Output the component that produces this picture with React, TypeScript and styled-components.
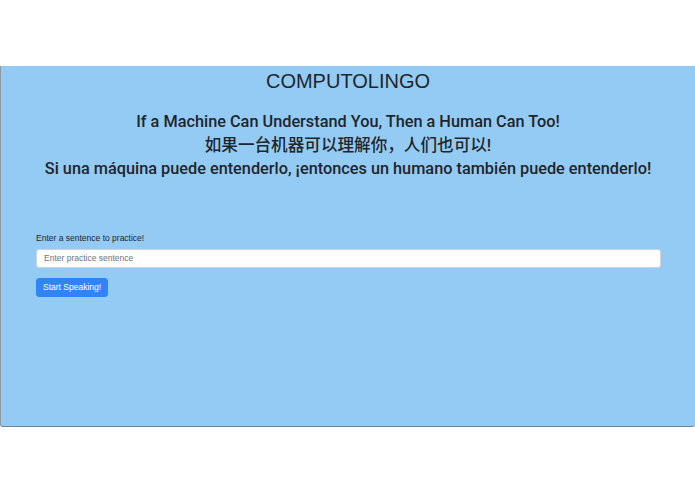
import styled, { createGlobalStyle } from 'styled-components'

const GlobalStyle = createGlobalStyle`
  html, body {
    margin: 0;
    padding: 0;
    background: #ffffff;
    font-family: "Liberation Sans", Arial, "Noto Sans CJK SC", sans-serif;
    color: #212529;
  }
`

const Page = styled.div`
  padding-top: 66px;
  height: 494px;
  box-sizing: border-box;
`

const Frame = styled.main`
  height: 361px;
  box-sizing: border-box;
  background: #94cbf5;
  border-left: 1px solid #8a9aa8;
  border-bottom: 1px solid #6f8294;
  border-radius: 0 0 3px 3px;
  display: flex;
  flex-direction: column;
`

const Header = styled.header`
  text-align: center;
  padding-top: 3px;
`

const Title = styled.h1`
  margin: 0;
  font-size: 20px;
  font-weight: 400;
  line-height: 24px;
`

const Tagline = styled.p<{ $cjk?: boolean }>`
  margin: 0;
  font-family: Roboto, "Noto Sans CJK SC", sans-serif;
  font-size: ${p => (p.$cjk ? '16.6px' : '16.3px')};
  line-height: 23.5px;
  font-weight: 500;
  color: #1f2529;
`

const Taglines = styled.div`
  margin-top: 17px;
`

const Form = styled.form`
  margin-top: 52px;
  padding: 0 34px 0 35px;
  display: flex;
  flex-direction: column;
  align-items: flex-start;
`

const Label = styled.label`
  font-size: 8.5px;
  line-height: 10px;
  margin-bottom: 6px;
`

const Input = styled.input`
  width: 100%;
  height: 19px;
  box-sizing: border-box;
  border: 1px solid #ced4da;
  border-radius: 3px;
  background: #ffffff;
  padding: 0 7px;
  font-family: inherit;
  font-size: 8.5px;
  color: #495057;
  outline: none;

  &::placeholder {
    color: #6c757d;
  }
`

const Button = styled.button`
  margin-top: 10px;
  height: 19px;
  padding: 0 6px;
  background: #2f85f7;
  border: 1px solid #2f85f7;
  border-radius: 3px;
  color: #ffffff;
  font-family: inherit;
  font-size: 8.5px;
`

export default function App() {
  return (
    <Page>
      <GlobalStyle />
      <Frame>
        <Header>
          <Title>COMPUTOLINGO</Title>
          <Taglines>
            <Tagline>If a Machine Can Understand You, Then a Human Can Too!</Tagline>
            <Tagline $cjk>如果一台机器可以理解你，人们也可以!</Tagline>
            <Tagline>Si una máquina puede entenderlo, ¡entonces un humano también puede entenderlo!</Tagline>
          </Taglines>
        </Header>
        <Form onSubmit={e => e.preventDefault()}>
          <Label htmlFor="sentence">Enter a sentence to practice!</Label>
          <Input id="sentence" placeholder="Enter practice sentence" />
          <Button type="submit">Start Speaking!</Button>
        </Form>
      </Frame>
    </Page>
  )
}
